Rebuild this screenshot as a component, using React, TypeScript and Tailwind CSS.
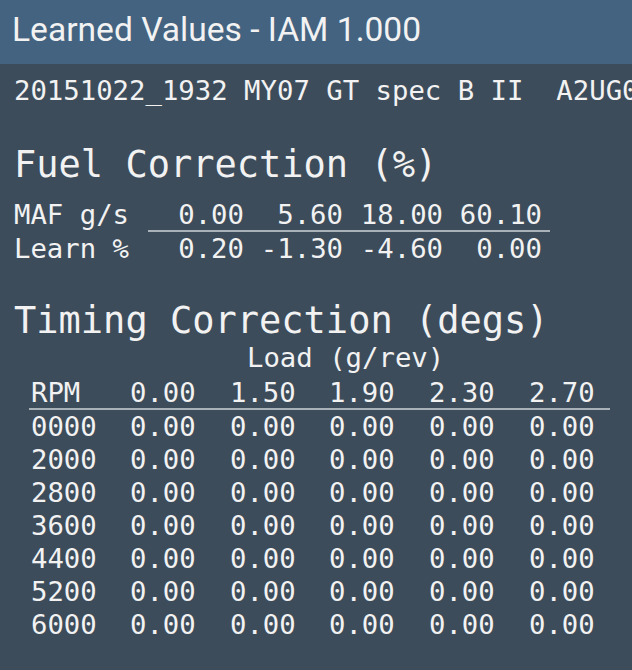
const mono = "font-['DejaVu_Sans_Mono',monospace]";

const fuelMaf = ["0.00", "5.60", "18.00", "60.10"];
const fuelLearn = ["0.20", "-1.30", "-4.60", "0.00"];
const fuelCol = ["w-[100px] pr-[4px]", "w-[99px] pr-[4px]", "w-[100px] pr-[4px]", "w-[103px] pr-[8px]"];
const loads = ["0.00", "1.50", "1.90", "2.30", "2.70"];
const rpms = ["0000", "2000", "2800", "3600", "4400", "5200", "6000"];
const colW = ["w-[99px]", "w-[100px]", "w-[99px]", "w-[100px]", "w-[100px]", "w-[83px]"];

export default function App() {
  return (
    <div className="w-[632px] h-[670px] overflow-hidden bg-[#3d4c5a] text-[#f2f2f2]">
      <div className="h-[64px] bg-[#436380] pl-[12px] font-['Roboto',sans-serif] text-[33.6px] leading-[59px] whitespace-nowrap">
        Learned Values - IAM 1.000
      </div>
      <div className={`${mono} text-[27.3px]`}>
        <div className="mt-[10px] pl-[14px] leading-[33px] h-[33px] whitespace-pre overflow-hidden">
          {"20151022_1932 MY07 GT spec B II  A2UG000G"}
        </div>

        <div className="mt-[36px] pl-[14px] text-[37px] leading-[44px] h-[44px] whitespace-pre">
          Fuel Correction (%)
        </div>
        <div className="mt-[12px] pl-[14px]">
          <div className="flex h-[31px] leading-[31px]">
            <div className="w-[134px] whitespace-pre">MAF g/s</div>
            <div className="flex border-b-2 border-[#a9b1b9] h-[33px]">
              {fuelMaf.map((v, i) => (
                <div key={i} className={`${fuelCol[i]} text-right`}>{v}</div>
              ))}
            </div>
          </div>
          <div className="flex mt-[2px] h-[33px] leading-[33px]">
            <div className="w-[134px] whitespace-pre">Learn %</div>
            <div className="flex">
              {fuelLearn.map((v, i) => (
                <div key={i} className={`${fuelCol[i]} text-right`}>{v}</div>
              ))}
            </div>
          </div>
        </div>

        <div className="mt-[36px] pl-[14px] text-[37px] leading-[40px] h-[40px] whitespace-pre">
          Timing Correction (degs)
        </div>
        <div className="pl-[247px] h-[34px] leading-[34px] whitespace-pre">Load (g/rev)</div>
        <div className="ml-[29px] w-[581px] mt-[2px]">
          <div className="flex h-[33px] leading-[31px] border-b-2 border-[#a9b1b9]">
            <div className={`${colW[0]} pl-[2px]`}>RPM</div>
            {loads.map((v, i) => (
              <div key={i} className={`${colW[i + 1]} pl-[2px]`}>{v}</div>
            ))}
          </div>
          {rpms.map((r) => (
            <div key={r} className="flex h-[33px] leading-[33px]">
              <div className={`${colW[0]} pl-[2px]`}>{r}</div>
              {loads.map((_, i) => (
                <div key={i} className={`${colW[i + 1]} pl-[2px]`}>0.00</div>
              ))}
            </div>
          ))}
        </div>
      </div>
    </div>
  );
}
